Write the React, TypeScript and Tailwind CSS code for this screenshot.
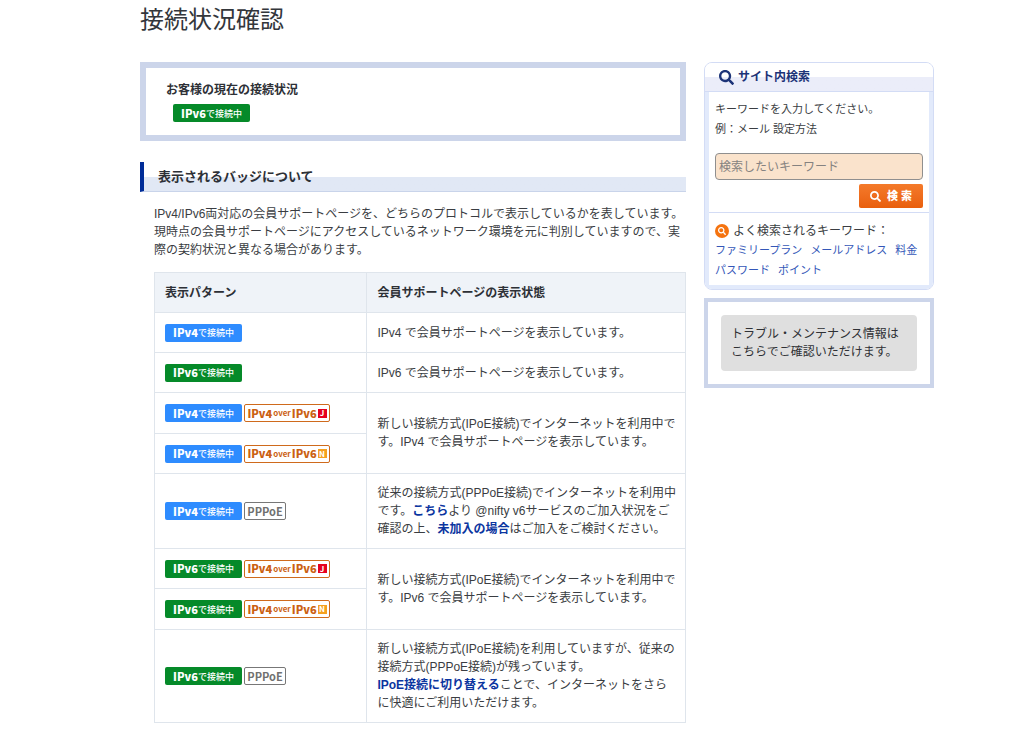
import React from "react";
import { FaSearch } from "react-icons/fa";

type Version = 4 | 6;

function ConnectBadge({ version }: { version: Version }) {
  const color = version === 4 ? "bg-[#2e8cff]" : "bg-[#058a29]";
  return (
    <span
      className={`inline-flex h-[18px] w-[77px] items-center justify-center rounded-xs font-['Noto_Sans_CJK_JP',sans-serif] leading-none text-white ${color}`}
    >
      <b className="text-[11px] font-black">IPv{version}</b>
      <span className="text-[9px] font-medium">で接続中</span>
    </span>
  );
}

function OverBadge({ mark }: { mark: "J" | "N" }) {
  const color = mark === "J" ? "bg-[#e60020]" : "bg-[#f5a020]";
  return (
    <span className="inline-flex h-[18px] w-[86px] items-center justify-center gap-px rounded-xs border border-[#cf6a1c] font-['Noto_Sans_CJK_JP',sans-serif] leading-none font-bold text-[#cb6112]">
      <b className="text-[11px] font-black">IPv4</b>
      <span className="text-[8px]">over</span>
      <b className="text-[11px] font-black">IPv6</b>
      <span className={`flex size-[9px] items-center justify-center text-[8px] leading-none text-white ${color}`}>
        {mark}
      </span>
    </span>
  );
}

function PppoeBadge() {
  return (
    <span className="inline-flex h-[18px] w-[42px] items-center justify-center rounded-xs border border-[#777] font-['Noto_Sans_CJK_JP',sans-serif] text-[11px] leading-none font-bold text-[#707070]">
      PPPoE
    </span>
  );
}

const cell = "border border-[#dfe5ec] pl-2.5 pr-2";

function BadgeCell({ children }: { children: React.ReactNode }) {
  return (
    <td className={cell}>
      <div className="flex items-center gap-0.5">{children}</div>
    </td>
  );
}

function TextLink({ children }: { children: React.ReactNode }) {
  return (
    <a href="#" className="font-bold text-[#0b35a0]">
      {children}
    </a>
  );
}

function PatternTable() {
  return (
    <table className="ml-3.5 mt-[13px] w-[calc(100%-14px)] table-fixed border-collapse text-left">
      <colgroup>
        <col className="w-[40%]" />
        <col />
      </colgroup>
      <thead>
        <tr className="h-10 bg-[#eff3f8] text-[#2d3036]">
          <th className={cell}>表示パターン</th>
          <th className={cell}>会員サポートページの表示状態</th>
        </tr>
      </thead>
      <tbody>
        <tr className="h-10">
          <BadgeCell>
            <ConnectBadge version={4} />
          </BadgeCell>
          <td className={cell}>IPv4 で会員サポートページを表示しています。</td>
        </tr>
        <tr className="h-10">
          <BadgeCell>
            <ConnectBadge version={6} />
          </BadgeCell>
          <td className={cell}>IPv6 で会員サポートページを表示しています。</td>
        </tr>
        <tr className="h-[41px]">
          <BadgeCell>
            <ConnectBadge version={4} />
            <OverBadge mark="J" />
          </BadgeCell>
          <td className={cell} rowSpan={2}>
            新しい接続方式(IPoE接続)でインターネットを利用中です。IPv4 で会員サポートページを表示しています。
          </td>
        </tr>
        <tr className="h-10">
          <BadgeCell>
            <ConnectBadge version={4} />
            <OverBadge mark="N" />
          </BadgeCell>
        </tr>
        <tr className="h-[75px]">
          <BadgeCell>
            <ConnectBadge version={4} />
            <PppoeBadge />
          </BadgeCell>
          <td className={cell}>
            従来の接続方式(PPPoE接続)でインターネットを利用中です。<TextLink>こちら</TextLink>より @nifty
            v6サービスのご加入状況をご確認の上、<TextLink>未加入の場合</TextLink>はご加入をご検討ください。
          </td>
        </tr>
        <tr className="h-10">
          <BadgeCell>
            <ConnectBadge version={6} />
            <OverBadge mark="J" />
          </BadgeCell>
          <td className={cell} rowSpan={2}>
            新しい接続方式(IPoE接続)でインターネットを利用中です。IPv6 で会員サポートページを表示しています。
          </td>
        </tr>
        <tr className="h-[41px]">
          <BadgeCell>
            <ConnectBadge version={6} />
            <OverBadge mark="N" />
          </BadgeCell>
        </tr>
        <tr className="h-[93px]">
          <BadgeCell>
            <ConnectBadge version={6} />
            <PppoeBadge />
          </BadgeCell>
          <td className={cell}>
            新しい接続方式(IPoE接続)を利用していますが、従来の接続方式(PPPoE接続)が残っています。
            <br />
            <TextLink>IPoE接続に切り替える</TextLink>ことで、インターネットをさらに快適にご利用いただけます。
          </td>
        </tr>
      </tbody>
    </table>
  );
}

const keywords = ["ファミリープラン", "メールアドレス", "料金", "パスワード", "ポイント"];

function SearchPanel() {
  return (
    <section className="overflow-hidden rounded-lg border border-[#d3dcf5]">
      <h2 className="flex h-[29px] items-center gap-1 border-b border-[#d3dcf5] bg-linear-to-b from-white from-50% to-[#ebedf9] to-50% pl-3.5 font-bold text-[#1d3478]">
        <FaSearch className="size-[15px]" />
        サイト内検索
      </h2>
      <div className="border-4 border-t-0 border-[#e2eafb] text-[11px] leading-5">
        <form className="border-b border-[#d3dcf5] px-1.5 pt-[7px] pb-1" onSubmit={(e) => e.preventDefault()}>
          <label htmlFor="keyword" className="block">
            キーワードを入力してください。
            <br />
            例：メール 設定方法
          </label>
          <input
            id="keyword"
            type="text"
            placeholder="検索したいキーワード"
            className="mt-3.5 block h-[27px] w-full rounded border border-[#8f8f8f] bg-[#fae3cc] px-[3px] text-xs placeholder:text-[#858280]"
          />
          <button
            type="submit"
            className="mt-1 ml-auto flex h-6 w-16 items-center justify-center gap-1.5 rounded-xs bg-linear-to-b from-[#f47a2a] to-[#e95f0c] text-[11px] font-black text-white"
          >
            <FaSearch className="size-[11px]" />
            検 索
          </button>
        </form>
        <div className="px-1.5 pt-[9px] pb-[5px]">
          <p className="flex items-center gap-1 text-xs leading-[18px]">
            <span className="flex size-3.5 items-center justify-center rounded-full bg-[#f5730f]">
              <FaSearch className="size-2 text-white" />
            </span>
            よく検索されるキーワード：
          </p>
          <ul className="flex flex-wrap gap-x-2">
            {keywords.map((k) => (
              <li key={k}>
                <a href="#" className="text-[#3457b8]">
                  {k}
                </a>
              </li>
            ))}
          </ul>
        </div>
      </div>
    </section>
  );
}

export default function App() {
  return (
    <div className="bg-white pr-[90px] pl-[140px] font-['Liberation_Sans','Noto_Sans_CJK_JP',sans-serif] text-xs leading-[18px] text-[#3a3d42]">
      <h1 className="h-[62px] pt-1 text-2xl leading-8 text-[#33363b]">接続状況確認</h1>
      <div className="flex items-start gap-[18px]">
        <main className="min-w-0 flex-1">
          <section className="border-[6px] border-[#ccd5ea] px-5 pt-[13px] pb-[13px]">
            <h2 className="font-bold text-[#2d3036]">お客様の現在の接続状況</h2>
            <div className="mt-[5px] ml-[7px] flex">
              <ConnectBadge version={6} />
            </div>
          </section>
          <h2 className="mt-[21px] flex h-[30px] items-center border-b border-l-4 border-b-[#c9d4ea] border-l-[#002c98] bg-linear-to-b from-white from-50% to-[#e1e8f5] to-50% pl-3.5 text-[13px] font-bold text-[#2d3036]">
            表示されるバッジについて
          </h2>
          <p className="mt-[13px] ml-3.5">
            IPv4/IPv6両対応の会員サポートページを、どちらのプロトコルで表示しているかを表しています。
            <br />
            現時点の会員サポートページにアクセスしているネットワーク環境を元に判別していますので、実際の契約状況と異なる場合があります。
          </p>
          <PatternTable />
        </main>
        <aside className="w-[230px] shrink-0">
          <SearchPanel />
          <section className="mt-2 border-4 border-[#ccd5ea] p-[13px]">
            <a href="#" className="block rounded bg-[#dfdfdf] px-2.5 py-2.5 text-[#2f3135]">
              トラブル・メンテナンス情報は
              <br />
              こちらでご確認いただけます。
            </a>
          </section>
        </aside>
      </div>
    </div>
  );
}
